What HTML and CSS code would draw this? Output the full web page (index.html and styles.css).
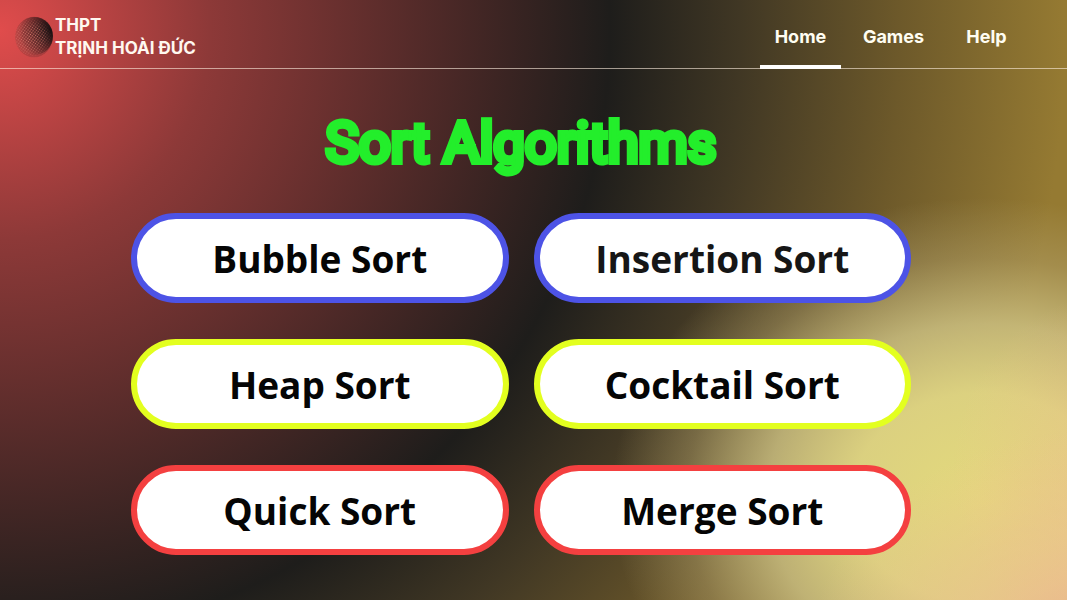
FILE: index.html
```html
<!DOCTYPE html>
<html lang="vi">
<head>
<meta charset="utf-8">
<meta name="viewport" content="width=device-width, initial-scale=1">
<title>Sort Algorithms</title>
<link rel="stylesheet" href="styles.css">
</head>
<body>
<header class="bar">
  <a class="brand" href="#">
    <svg class="logo" viewBox="0 0 40 42" aria-hidden="true">
      <defs>
        <pattern id="fine" width="1.8" height="1.8" patternUnits="userSpaceOnUse" patternTransform="rotate(35)">
          <circle cx="0.9" cy="0.9" r="0.6" fill="#2a1516"/>
        </pattern>
        <pattern id="holes" width="2.3" height="2.3" patternUnits="userSpaceOnUse" patternTransform="rotate(35)">
          <circle cx="1.15" cy="1.15" r="0.7" fill="#e08072"/>
        </pattern>
        <radialGradient id="shade" cx="0.95" cy="0.35" r="0.95">
          <stop offset="0" stop-color="#1a1112"/>
          <stop offset="0.3" stop-color="#1a1112" stop-opacity="0.8"/>
          <stop offset="0.9" stop-color="#1a1112" stop-opacity="0"/>
        </radialGradient>
        <radialGradient id="rim" cx="0.55" cy="0.45" r="0.55">
          <stop offset="0.6" stop-color="#fff"/>
          <stop offset="1" stop-color="#fff" stop-opacity="0.45"/>
        </radialGradient>
        <radialGradient id="fade" cx="0.42" cy="0.52" r="0.55">
          <stop offset="0" stop-color="#fff"/>
          <stop offset="0.6" stop-color="#fff" stop-opacity="0.7"/>
          <stop offset="1" stop-color="#fff" stop-opacity="0"/>
        </radialGradient>
        <mask id="edge"><ellipse cx="20" cy="21" rx="19" ry="20.5" fill="url(#rim)"/></mask>
        <mask id="center"><circle cx="20" cy="21" r="19" fill="url(#fade)"/></mask>
      </defs>
      <ellipse cx="20" cy="21" rx="19" ry="20.5" fill="url(#fine)" mask="url(#edge)"/>
      <ellipse cx="20.5" cy="20" rx="18.5" ry="19" fill="url(#shade)"/>
      <ellipse cx="20" cy="21" rx="19" ry="20" fill="url(#holes)" mask="url(#center)"/>
    </svg>
    <span class="school">THPT<br>TRỊNH HOÀI ĐỨC</span>
  </a>
  <nav class="menu">
    <a class="link current" href="#" aria-current="page">Home</a>
    <a class="link" href="#">Games</a>
    <a class="link" href="#">Help</a>
  </nav>
</header>
<main class="page">
  <h1 class="title">Sort Algorithms</h1>
  <div class="choices">
    <button class="choice blue" type="button">Bubble Sort</button>
    <button class="choice blue soft" type="button">Insertion Sort</button>
    <button class="choice yellow" type="button">Heap Sort</button>
    <button class="choice yellow" type="button">Cocktail Sort</button>
    <button class="choice red" type="button">Quick Sort</button>
    <button class="choice red" type="button">Merge Sort</button>
  </div>
</main>
</body>
</html>
```
FILE: styles.css
```css
* { box-sizing: border-box; }

body {
  margin: 0;
  min-height: 100vh;
  font-family: Inter, "Liberation Sans", sans-serif;
  background:
    radial-gradient(ellipse 300px 220px at 104% 108%, rgba(243, 180, 148, 0.9), rgba(240, 190, 145, 0.5) 50%, rgba(240, 195, 145, 0) 100%),
    radial-gradient(ellipse 180px 180px at 106% 78%, rgba(243, 190, 140, 0.5), rgba(243, 190, 140, 0) 100%),
    radial-gradient(ellipse 370px 300px at 92% 83%, #e3d97c 0%, rgba(224, 214, 132, 0.95) 35%, rgba(212, 202, 140, 0.75) 58%, rgba(190, 176, 125, 0.35) 80%, rgba(170, 150, 95, 0) 100%),
    radial-gradient(circle at 0 30px, #e04c4c 0, #8d3938 210px, #1e1d1b 610px, #403724 740px, #6d592a 900px, #957a32 1065px);
  background-color: #1e1d1b;
}

.bar {
  display: flex;
  justify-content: space-between;
  height: 69px;
  padding: 0 40px 0 14px;
  border-bottom: 1px solid rgba(255, 240, 225, 0.6);
}

.brand {
  display: flex;
  align-items: center;
  gap: 1px;
  padding-top: 5px;
  color: #fff8f0;
  text-decoration: none;
}

.logo { width: 40px; height: 42px; }

.school {
  font-size: 17px;
  font-weight: 700;
  line-height: 23px;
}

.menu {
  display: flex;
  gap: 12px;
}

.link {
  width: 81px;
  height: 69px;
  padding-top: 5px;
  border-bottom: 4px solid transparent;
  color: #fffdf2;
  font-size: 18px;
  font-weight: 700;
  line-height: 64px;
  text-align: center;
  text-decoration: none;
}

.current { border-bottom-color: #fff; }

.page { padding: 24px 156px 24px 131px; }

.title {
  margin: 0 0 20px;
  color: #23ee2b;
  font-family: Roboto, sans-serif;
  font-size: 56px;
  font-weight: 400;
  line-height: 100px;
  text-align: center;
  -webkit-text-stroke: 6px #23ee2b;
  stroke-linejoin: round;
  paint-order: stroke fill;
}

.choices {
  display: grid;
  grid-template-columns: 1fr 1fr;
  gap: 36px 25px;
}

.choice {
  height: 90px;
  border: 6px solid;
  border-radius: 45px;
  background: #fff;
  color: #050505;
  font-family: "Open Sans", "Noto Sans", sans-serif;
  font-size: 37px;
  font-weight: 700;
}

.soft { color: #161616; }
.blue { border-color: #4d53e6; }
.yellow { border-color: #e3ff1f; }
.red { border-color: #f44040; }
```
